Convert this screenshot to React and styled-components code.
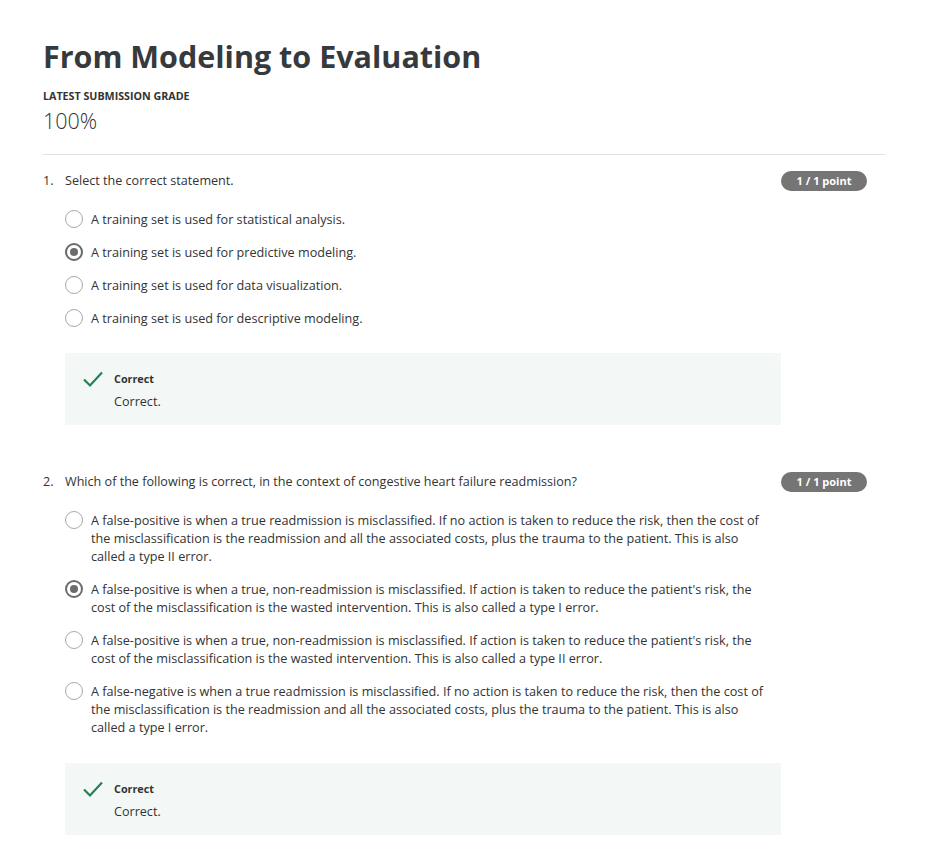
import React from "react";
import styled, { createGlobalStyle } from "styled-components";

const Global = createGlobalStyle`
  body {
    margin: 0;
    background: #ffffff;
    font-family: "Open Sans", "Noto Sans", sans-serif;
    color: #1f1f1f;
  }
`;

const Page = styled.div`
  padding: 34px 43px 30px 43px;
  width: 842px;
`;

const Title = styled.h1`
  margin: 0;
  font-size: 30.5px;
  font-weight: 700;
  color: #373a3c;
  line-height: 44px;
`;

const GradeLabel = styled.div`
  margin-top: 10px;
  font-size: 10.7px;
  font-weight: 700;
  text-transform: uppercase;
  color: #333;
  line-height: 16px;
`;

const Grade = styled.div`
  font-size: 21.5px;
  font-weight: 300;
  color: #333;
  line-height: 28px;
  margin-top: 3px;
`;

const Divider = styled.hr`
  margin: 19px 0 17px 0;
  border: none;
  border-top: 1px solid #e1e1e1;
`;

const Question = styled.section`
  margin-bottom: ${(p) => p.gap}px;
`;

const QuestionHead = styled.div`
  display: flex;
  align-items: flex-start;
  width: 824px;
  font-size: 12.6px;
  line-height: 18px;
  color: #333;
`;

const Num = styled.span`
  width: 22px;
  flex: none;
`;

const QText = styled.span`
  flex: 1;
`;

const Badge = styled.span`
  flex: none;
  background: #757575;
  color: #fff;
  font-size: 11px;
  font-weight: 700;
  border-radius: 10px;
  height: 20px;
  line-height: 20px;
  width: 86px;
  text-align: center;
  margin-top: -1px;
`;

const Options = styled.div`
  margin: ${(p) => p.top}px 0 0 22px;
  display: flex;
  flex-direction: column;
  gap: ${(p) => p.gap}px;
  width: 700px;
`;

const Option = styled.label`
  display: flex;
  align-items: flex-start;
  font-size: 12.65px;
  line-height: 18px;
  color: #333;
`;

const Radio = styled.span`
  flex: none;
  box-sizing: border-box;
  width: 18px;
  height: 18px;
  border-radius: 50%;
  border: ${(p) => (p.checked ? "2px solid #6b6b6b" : "1px solid #a8a8a8")};
  margin-right: 8px;
  display: flex;
  align-items: center;
  justify-content: center;
  &::after {
    content: "";
    display: ${(p) => (p.checked ? "block" : "none")};
    width: 8px;
    height: 8px;
    border-radius: 50%;
    background: #6b6b6b;
  }
`;

const Feedback = styled.div`
  margin: ${(p) => p.top}px 0 0 22px;
  width: 716px;
  height: 72px;
  box-sizing: border-box;
  background: #f3f8f6;
  padding: 17px 0 0 17px;
  display: flex;
  align-items: flex-start;
`;

const Check = styled.svg`
  width: 22px;
  height: 18px;
  margin-right: 10px;
  flex: none;
`;

const FbBody = styled.div`
  display: flex;
  flex-direction: column;
`;

const FbTitle = styled.div`
  font-size: 10.8px;
  font-weight: 700;
  line-height: 18px;
  color: #333;
`;

const FbText = styled.div`
  font-size: 12.6px;
  line-height: 18px;
  margin-top: 5px;
  color: #333;
`;

const CheckIcon = () => (
  <Check viewBox="0 0 22 18">
    <path d="M2 9.5 L8 15.5 L20 2.5" fill="none" stroke="#1f8354" strokeWidth="2.2" />
  </Check>
);

const questions = [
  {
    n: "1.",
    text: "Select the correct statement.",
    optTop: 19,
    optGap: 15,
    fbTop: 26,
    after: 48,
    options: [
      "A training set is used for statistical analysis.",
      "A training set is used for predictive modeling.",
      "A training set is used for data visualization.",
      "A training set is used for descriptive modeling.",
    ],
    answer: 1,
  },
  {
    n: "2.",
    text: "Which of the following is correct, in the context of congestive heart failure readmission?",
    optTop: 19,
    optGap: 15,
    fbTop: 27,
    after: 0,
    options: [
      "A false-positive is when a true readmission is misclassified. If no action is taken to reduce the risk, then the cost of the misclassification is the readmission and all the associated costs, plus the trauma to the patient. This is also called a type II error.",
      "A false-positive is when a true, non-readmission is misclassified. If action is taken to reduce the patient's risk, the cost of the misclassification is the wasted intervention. This is also called a type I error.",
      "A false-positive is when a true, non-readmission is misclassified. If action is taken to reduce the patient's risk, the cost of the misclassification is the wasted intervention. This is also called a type II error.",
      "A false-negative is when a true readmission is misclassified. If no action is taken to reduce the risk, then the cost of the misclassification is the readmission and all the associated costs, plus the trauma to the patient. This is also called a type I error.",
    ],
    answer: 1,
  },
];

export default function App() {
  return (
    <Page>
      <Global />
      <Title>From Modeling to Evaluation</Title>
      <GradeLabel>Latest Submission Grade</GradeLabel>
      <Grade>100%</Grade>
      <Divider />
      {questions.map((q) => (
        <Question key={q.n} gap={q.after}>
          <QuestionHead>
            <Num>{q.n}</Num>
            <QText>{q.text}</QText>
            <Badge>1 / 1 point</Badge>
          </QuestionHead>
          <Options top={q.optTop} gap={q.optGap}>
            {q.options.map((o, i) => (
              <Option key={i}>
                <Radio checked={i === q.answer} />
                <span>{o}</span>
              </Option>
            ))}
          </Options>
          <Feedback top={q.fbTop}>
            <CheckIcon />
            <FbBody>
              <FbTitle>Correct</FbTitle>
              <FbText>Correct.</FbText>
            </FbBody>
          </Feedback>
        </Question>
      ))}
    </Page>
  );
}
